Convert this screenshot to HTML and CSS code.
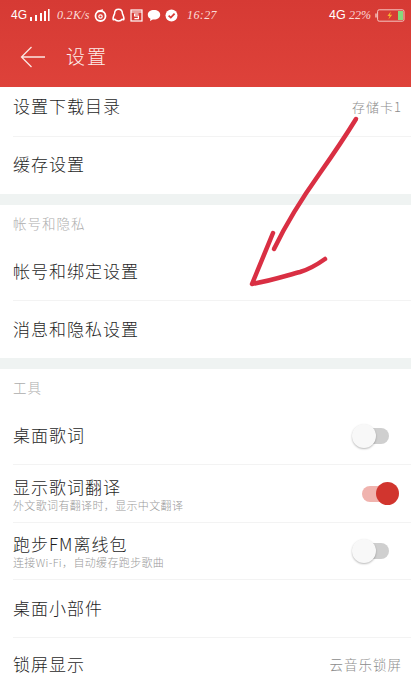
FILE: index.html
```html
<!DOCTYPE html>
<html lang="zh-CN">
<head>
<meta charset="utf-8">
<title>设置</title>
<link rel="stylesheet" href="styles.css">
</head>
<body>
<div class="phone">
  <header class="header">
    <div class="status">
      <span class="st-net">4G</span>
      <svg class="st-signal" width="20" height="13" viewBox="0 0 20 13"><g fill="#fff"><rect x="0" y="8" width="2" height="4"/><rect x="5" y="6" width="2" height="6"/><rect x="10" y="4" width="2" height="8"/><rect x="14" y="2" width="2" height="10"/><rect x="18" y="0" width="1.6" height="12"/></g></svg>
      <span class="st-speed">0.2K/s</span>
      <svg class="st-icon" width="13" height="13" viewBox="0 0 13 13"><circle cx="6.5" cy="7" r="5" fill="none" stroke="#fff" stroke-width="1.8"/><circle cx="6.5" cy="7.5" r="1.7" fill="none" stroke="#fff" stroke-width="1.2"/><path d="M3 2.5 L9 0.8" stroke="#fff" stroke-width="1.4"/></svg>
      <svg class="st-icon" width="15" height="15" viewBox="0 0 15 15"><path d="M7.5 1.2C4.6 1.2 3.6 3.6 3.6 5.6 2.6 7.6 1.6 10 2.2 11.6 3 12 3.6 11.2 3.8 11.2 4.6 12.6 5.6 13 7.5 13S10.4 12.6 11.2 11.2C11.4 11.2 12 12 12.8 11.6 13.4 10 12.4 7.6 11.4 5.6 11.4 3.6 10.4 1.2 7.5 1.2Z" fill="none" stroke="#fff" stroke-width="1.5"/></svg>
      <svg class="st-icon" width="13" height="13" viewBox="0 0 13 13"><rect x="1" y="1" width="11" height="11" fill="none" stroke="#fff" stroke-width="1.2"/><path d="M1 3H12" stroke="#fff" stroke-width="1"/><path d="M8.6 5H4.6V7H8.4V9.6H4.4" fill="none" stroke="#fff" stroke-width="1.2"/></svg>
      <svg class="st-icon" width="14" height="13" viewBox="0 0 14 13"><path d="M7 1C3.4 1 .8 3 .8 5.8 .8 7.6 1.8 9 3.4 9.8L3 12 5.8 10.5C6.2 10.6 6.6 10.6 7 10.6 10.6 10.6 13.2 8.6 13.2 5.8S10.6 1 7 1Z" fill="#fff"/></svg>
      <svg class="st-icon" width="13" height="13" viewBox="0 0 13 13"><circle cx="6.5" cy="6.5" r="6" fill="#fff"/><path d="M3.6 6.6 5.8 8.6 9.6 4.6" fill="none" stroke="#d83b35" stroke-width="1.8"/></svg>
      <span class="st-time">16:27</span>
      <span class="st-right">
        <span class="st-net st-net-right">4G</span>
        <span class="st-battery-text">22%</span>
        <svg class="battery" width="30" height="13" viewBox="0 0 30 13"><path d="M1 4.5V8.5" stroke="#f4c7c2" stroke-width="1.4"/><rect x="2.6" y=".8" width="26.4" height="11.4" rx="1.6" fill="none" stroke="#f4c7c2" stroke-width="1"/><path d="M15.8 2.6 12.4 7H14.6L13.4 10.4 17.2 5.8H14.9Z" fill="#f6b52e"/><rect x="23" y="2" width="5" height="9" fill="#86d97c"/></svg>
      </span>
    </div>
    <div class="toolbar">
      <svg class="back" width="26" height="22" viewBox="0 0 26 22"><path d="M25 11H2M11.5 1 1.5 11 11.5 21" fill="none" stroke="#fbe6e2" stroke-width="1.3"/></svg>
      <h1 class="title">设置</h1>
    </div>
  </header>

  <main>
    <div class="row row-first">
      <span class="label">设置下载目录</span>
      <span class="value">存储卡1</span>
    </div>
    <div class="row row-last row-cache"><span class="label">缓存设置</span></div>

    <div class="gap"></div>
    <div class="section">帐号和隐私</div>
    <div class="row row-account"><span class="label">帐号和绑定设置</span></div>
    <div class="row row-last row-privacy"><span class="label">消息和隐私设置</span></div>

    <div class="gap"></div>
    <div class="section">工具</div>
    <div class="row row-tool">
      <span class="label">桌面歌词</span>
      <span class="switch"><span class="track"></span><span class="knob"></span></span>
    </div>
    <div class="row row-tool">
      <span class="stack"><span class="label label-tight">显示歌词翻译</span><span class="sub">外文歌词有翻译时，显示中文翻译</span></span>
      <span class="switch on"><span class="track"></span><span class="knob"></span></span>
    </div>
    <div class="row row-tool row-short">
      <span class="stack"><span class="label label-tight">跑步FM离线包</span><span class="sub">连接Wi-Fi，自动缓存跑步歌曲</span></span>
      <span class="switch"><span class="track"></span><span class="knob"></span></span>
    </div>
    <div class="row row-tool"><span class="label">桌面小部件</span></div>
    <div class="row row-last row-lock">
      <span class="label">锁屏显示</span>
      <span class="value value-lock">云音乐锁屏</span>
    </div>
  </main>

  <svg class="scribble" width="411" height="691" viewBox="0 0 411 691"><path d="M356 119C343 140 332 156 320 173 305 194 287 222 274 249" fill="none" stroke="#d92f43" stroke-width="4.5" stroke-linecap="round" stroke-linejoin="round"/><path d="M273 233 252 284C270 281 285 276 300 272 310 269 318 264 325 259" fill="none" stroke="#d92f43" stroke-width="4.5" stroke-linecap="round" stroke-linejoin="round"/></svg>
</div>
</body>
</html>
```
FILE: styles.css
```css
* { box-sizing: border-box; margin: 0; padding: 0; }
html, body { width: 411px; height: 691px; overflow: hidden; background: #fff; }
body { font-family: "Noto Sans CJK SC", "Noto Sans", sans-serif; color: #222; }
.phone { position: relative; width: 411px; height: 691px; overflow: hidden; background: #fff; }

.header { height: 87px; background: linear-gradient(#d63a34, #de423a); color: #fff; }
.status { height: 30px; padding: 0 6px 0 11px; display: flex; align-items: center; font-size: 11px; }
.st-net { font-family: "Liberation Sans", sans-serif; font-size: 12px; width: 19px; }
.st-speed { font-family: "Liberation Serif", serif; font-style: italic; font-size: 12px; margin-left: 7px; width: 33px; letter-spacing: .3px; color: #fbdcd8; white-space: nowrap; }
.st-icon { margin-left: 4px; flex: none; }
.st-time { font-family: "Liberation Serif", serif; font-style: italic; font-size: 12px; margin-left: 9px; letter-spacing: .4px; color: #fbdcd8; }
.st-right { margin-left: auto; display: flex; align-items: center; }
.st-net-right { width: 16px; font-size: 12.5px; }
.st-battery-text { font-family: "Liberation Serif", serif; font-style: italic; font-size: 12px; margin-left: 4px; color: #fbdcd8; }
.battery { display: block; margin-left: 4px; flex: none; }

.toolbar { height: 57px; padding: 0 0 3px 20px; display: flex; align-items: center; }
.back { flex: none; }
.title { margin: 0 0 3px 20px; font-size: 19px; font-weight: 300; letter-spacing: 2px; color: #fdeeec; }

.row { display: flex; align-items: center; justify-content: space-between; margin-left: 13px; padding-right: 22px; border-bottom: 1px solid #f3f3f3; }
.row-first { height: 50px; padding-bottom: 10px; padding-right: 9px; }
.row-cache { height: 57px; padding-bottom: 2px; }
.row-account { height: 58px; }
.row-privacy { height: 57px; }
.row-tool { height: 58px; }
.row-short { height: 57px; }
.row-lock { height: 54px; padding-right: 9px; }
.row-last { border-bottom: 0; }

.label { display: block; margin-bottom: 2px; font-size: 17px; font-weight: 300; letter-spacing: 1px; line-height: 22px; color: #1f1f1f; }
.label-tight { margin-bottom: 0; line-height: 21px; }
.value { font-size: 13px; font-weight: 300; letter-spacing: 1px; color: #8c8c8c; }
.value-lock { font-size: 13.5px; letter-spacing: 1px; margin-top: -2px; }
.stack { display: flex; flex-direction: column; }
.sub { margin-top: 2px; font-size: 11px; font-weight: 300; line-height: 13px; letter-spacing: .35px; color: #9a9a9a; }

.gap { height: 11px; background: #eff3f2; }
.section { height: 38px; padding: 9px 0 0 13px; font-size: 13.5px; font-weight: 300; letter-spacing: 1px; line-height: 18px; color: #adadad; }

.switch { position: relative; display: block; width: 37px; height: 24px; flex: none; }
.track { position: absolute; left: 8px; right: 0; top: 4px; height: 16px; border-radius: 8px; background: #cfcfcf; }
.knob { position: absolute; left: 0; top: 0; width: 24px; height: 24px; border-radius: 50%; background: #f8f8f8; box-shadow: 0 1px 2px rgba(0,0,0,.28); }
.switch.on { right: -10px; }
.switch.on .track { left: 0; right: 8px; background: #f0b3ae; }
.switch.on .knob { left: 14px; width: 23px; height: 23px; background: #d1352e; box-shadow: none; }

.scribble { position: absolute; left: 0; top: 0; pointer-events: none; }
```
